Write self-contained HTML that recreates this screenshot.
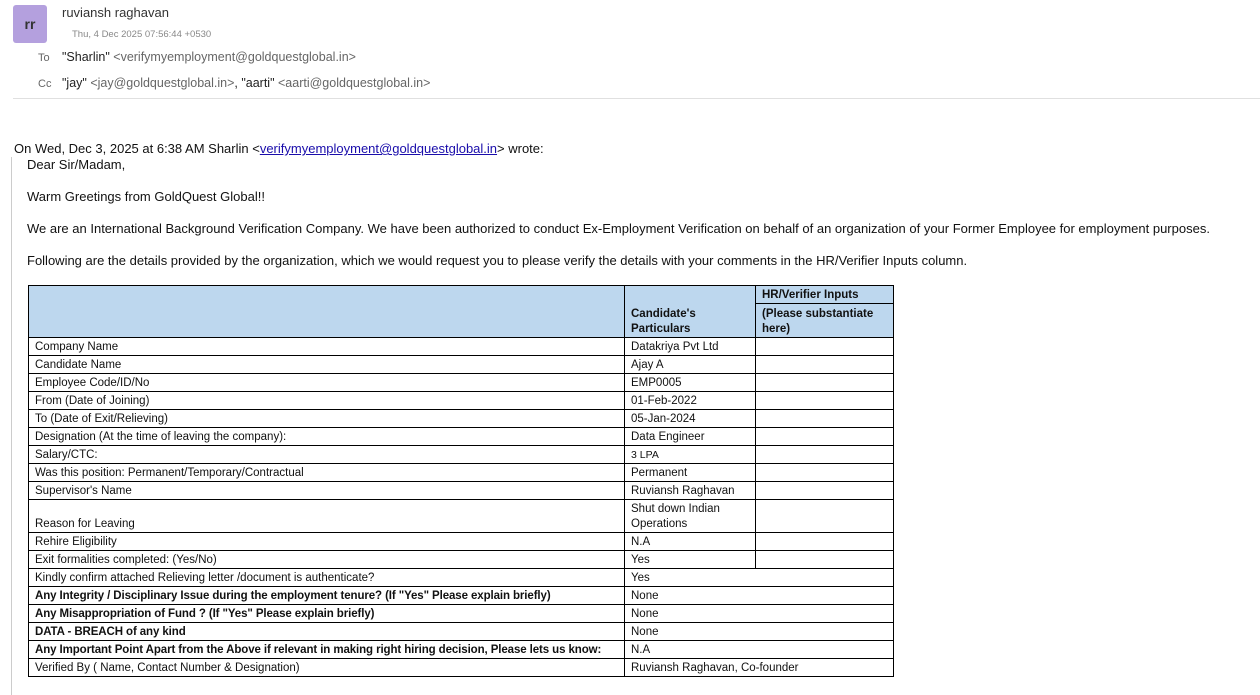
<!DOCTYPE html>
<html><head><meta charset="utf-8"><style>
*{margin:0;padding:0;box-sizing:border-box}
body{width:1260px;height:695px;overflow:hidden;background:#fff;font-family:"Liberation Sans",sans-serif;color:#222;position:relative}
.abs{position:absolute;white-space:nowrap}
.av{left:13px;top:5px;width:34px;height:38px;background:#b4a0de;border-radius:3px;font-weight:bold;font-size:14px;color:#333;text-align:center;line-height:38px}
.lbl{font-size:11px;color:#666}
.g{color:#666}
.t{font-size:13px;color:#111}
table{position:absolute;left:28px;top:285px;border-collapse:collapse;table-layout:fixed;width:865px;font-family:"Liberation Sans",sans-serif;font-size:11.5px;color:#111}
td{border:1px solid #000;padding:0 6px;height:18px;vertical-align:bottom;line-height:15px;white-space:nowrap;overflow:hidden}
.h{background:#bdd7ee;font-weight:bold}
b{font-weight:bold;letter-spacing:-0.1px}
</style></head><body>
<div class="abs av">rr</div>
<div class="abs" style="left:62px;top:5px;font-size:13px;color:#333">ruviansh raghavan</div>
<div class="abs" style="left:72px;top:29px;font-size:9.5px;color:#888">Thu, 4 Dec 2025 07:56:44 +0530</div>
<div class="abs lbl" style="left:38px;top:52px">To</div>
<div class="abs" style="left:62px;top:50px;font-size:12.5px;color:#222">"Sharlin" <span class="g">&lt;verifymyemployment@goldquestglobal.in&gt;</span></div>
<div class="abs lbl" style="left:38px;top:78px">Cc</div>
<div class="abs" style="left:62px;top:76px;font-size:12.5px;color:#222">"jay" <span class="g">&lt;jay@goldquestglobal.in&gt;</span>, "aarti" <span class="g">&lt;aarti@goldquestglobal.in&gt;</span></div>
<div class="abs" style="left:13px;top:98px;width:1247px;height:1px;background:#e0e0e0"></div>
<div class="abs t" style="left:14px;top:141px">On Wed, Dec 3, 2025 at 6:38 AM Sharlin &lt;<a style="color:#1a0dab" href="#">verifymyemployment@goldquestglobal.in</a>&gt; wrote:</div>
<div class="abs" style="left:11px;top:157px;width:1px;height:538px;background:#ccc"></div>
<div class="abs t" style="left:27px;top:157px">Dear Sir/Madam,</div>
<div class="abs t" style="left:27px;top:189px">Warm Greetings from GoldQuest Global!!</div>
<div class="abs t" style="left:27px;top:221px">We are an International Background Verification Company. We have been authorized to conduct Ex-Employment Verification on behalf of an organization of your Former Employee for employment purposes.</div>
<div class="abs t" style="left:27px;top:253px">Following are the details provided by the organization, which we would request you to please verify the details with your comments in the HR/Verifier Inputs column.</div>
<table>
<colgroup><col style="width:596px"><col style="width:131px"><col style="width:138px"></colgroup>
<tr><td class="h" rowspan="2" style="height:52px"></td><td class="h" rowspan="2" style="white-space:normal">Candidate's Particulars</td><td class="h">HR/Verifier Inputs</td></tr>
<tr><td class="h" style="height:34px;white-space:normal">(Please substantiate here)</td></tr>
<tr><td>Company Name</td><td>Datakriya Pvt Ltd</td><td></td></tr>
<tr><td>Candidate Name</td><td>Ajay A</td><td></td></tr>
<tr><td>Employee Code/ID/No</td><td>EMP0005</td><td></td></tr>
<tr><td>From (Date of Joining)</td><td>01-Feb-2022</td><td></td></tr>
<tr><td>To (Date of Exit/Relieving)</td><td>05-Jan-2024</td><td></td></tr>
<tr><td>Designation (At the time of leaving the company):</td><td>Data Engineer</td><td></td></tr>
<tr><td>Salary/CTC:</td><td style="font-size:10.5px">3 LPA</td><td></td></tr>
<tr><td>Was this position: Permanent/Temporary/Contractual</td><td>Permanent</td><td></td></tr>
<tr><td>Supervisor's Name</td><td>Ruviansh Raghavan</td><td></td></tr>
<tr><td style="height:33px">Reason for Leaving</td><td style="white-space:normal">Shut down Indian Operations</td><td></td></tr>
<tr><td>Rehire Eligibility</td><td>N.A</td><td></td></tr>
<tr><td>Exit formalities completed: (Yes/No)</td><td>Yes</td><td></td></tr>
<tr><td>Kindly confirm attached Relieving letter /document is authenticate?</td><td colspan="2">Yes</td></tr>
<tr><td><b>Any Integrity / Disciplinary Issue during the employment tenure? (If "Yes" Please explain briefly)</b></td><td colspan="2">None</td></tr>
<tr><td><b>Any Misappropriation of Fund ? (If "Yes" Please explain briefly)</b></td><td colspan="2">None</td></tr>
<tr><td><b>DATA - BREACH of any kind</b></td><td colspan="2">None</td></tr>
<tr><td><b>Any Important Point Apart from the Above if relevant in making right hiring decision, Please lets us know:</b></td><td colspan="2">N.A</td></tr>
<tr><td>Verified By ( Name, Contact Number &amp; Designation)</td><td colspan="2">Ruviansh Raghavan, Co-founder</td></tr>
</table>
</body></html>
